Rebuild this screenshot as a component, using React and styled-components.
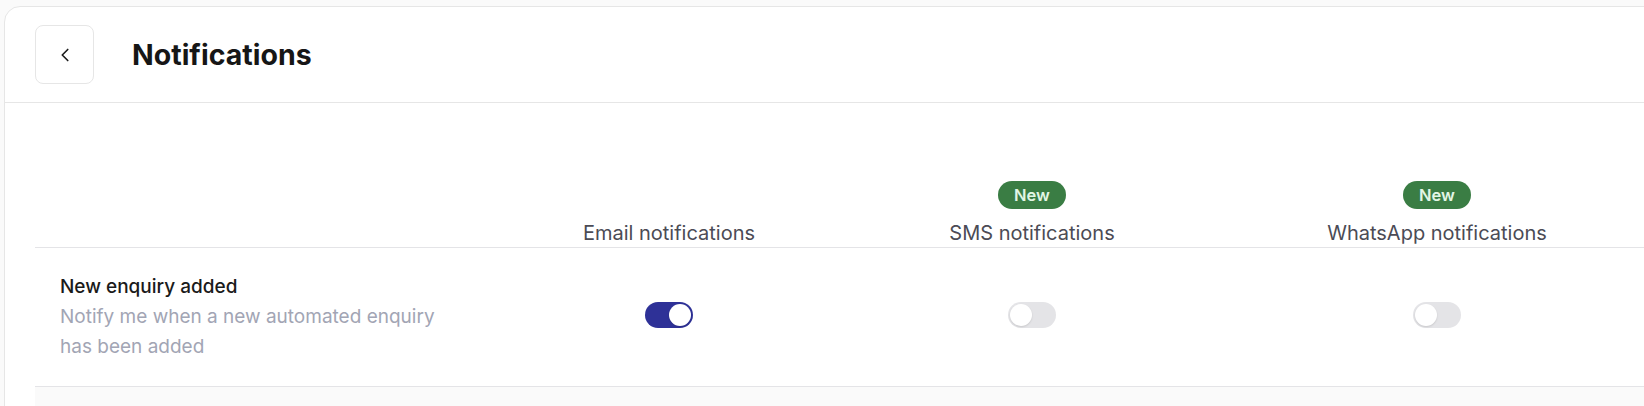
import React, { useState } from 'react';
import styled, { createGlobalStyle } from 'styled-components';
import { ChevronLeft } from 'lucide-react';

const GlobalStyle = createGlobalStyle`
  html, body {
    margin: 0;
    padding: 0;
    background: #fafafa;
    overflow: hidden;
    font-family: Inter, "Noto Sans", sans-serif;
  }
`;

const Card = styled.div`
  margin: 6px 0 0 4px;
  width: calc(100% + 40px);
  min-height: 420px;
  background: #fff;
  border: 1px solid #e6e6e6;
  border-top-left-radius: 16px;
`;

const Header = styled.div`
  display: flex;
  align-items: center;
  gap: 38px;
  padding: 18px 30px 18px;
  border-bottom: 1px solid #e6e6e6;
`;

const BackButton = styled.button`
  width: 59px;
  height: 59px;
  display: flex;
  align-items: center;
  justify-content: center;
  background: #fff;
  border: 1px solid #e6e6e6;
  border-radius: 8px;
  color: #1a1a1a;
  cursor: pointer;
  padding: 0;
`;

const Title = styled.h1`
  margin: 0;
  font-size: 28.5px;
  font-weight: 700;
  color: #161616;
`;

const Table = styled.div`
  padding: 78px 0 0 30px;
`;

const Row = styled.div`
  display: grid;
  grid-template-columns: 465px 338px 388px 422px;
  align-items: ${(p) => (p.$head ? 'end' : 'center')};
  border-bottom: 1px solid #e4e4e7;
  padding: ${(p) => (p.$head ? '0 0 1px' : '24px 0')};
`;

const HeadCell = styled.div`
  display: flex;
  flex-direction: column;
  align-items: center;
  gap: 11px;
`;

const Badge = styled.span`
  display: inline-block;
  background: #3a7d44;
  color: #e2f6e5;
  font-size: 16.5px;
  font-weight: 600;
  line-height: 20px;
  padding: 4px 16px;
  border-radius: 14px;
`;

const HeadLabel = styled.span`
  font-size: 20px;
  line-height: 26px;
  color: #4b4b55;
`;

const Info = styled.div`
  padding-left: 25px;
  max-width: 390px;
`;

const RowTitle = styled.div`
  font-size: 19px;
  font-weight: 500;
  line-height: 30px;
  color: #1a1a1a;
`;

const RowDesc = styled.div`
  font-size: 19px;
  line-height: 30px;
  color: #a2a5b4;
`;

const Cell = styled.div`
  display: flex;
  justify-content: center;
  padding-bottom: 5px;
`;

const Track = styled.button`
  position: relative;
  width: 48px;
  height: 26px;
  padding: 0;
  border: none;
  border-radius: 13px;
  cursor: pointer;
  background: ${(p) => (p.$on ? '#2e3197' : '#e4e4e7')};
`;

const Knob = styled.span`
  position: absolute;
  top: 2px;
  left: ${(p) => (p.$on ? '24px' : '2px')};
  width: 22px;
  height: 22px;
  border-radius: 50%;
  background: #fff;
  box-shadow: 0 1px 2px rgba(0, 0, 0, 0.12);
`;

const Footer = styled.div`
  height: 60px;
  background: #fafafa;
`;

const Toggle = ({ initial }) => {
  const [on, setOn] = useState(initial);
  return (
    <Track $on={on} onClick={() => setOn(!on)}>
      <Knob $on={on} />
    </Track>
  );
};

const channels = [
  { label: 'Email notifications', isNew: false, on: true },
  { label: 'SMS notifications', isNew: true, on: false },
  { label: 'WhatsApp notifications', isNew: true, on: false },
];

export default function App() {
  return (
    <>
      <GlobalStyle />
      <Card>
        <Header>
          <BackButton aria-label="Back">
            <ChevronLeft size={22} strokeWidth={1.8} />
          </BackButton>
          <Title>Notifications</Title>
        </Header>
        <Table>
          <Row $head>
            <div />
            {channels.map((c) => (
              <HeadCell key={c.label}>
                {c.isNew && <Badge>New</Badge>}
                <HeadLabel>{c.label}</HeadLabel>
              </HeadCell>
            ))}
          </Row>
          <Row>
            <Info>
              <RowTitle>New enquiry added</RowTitle>
              <RowDesc>Notify me when a new automated enquiry has been added</RowDesc>
            </Info>
            {channels.map((c) => (
              <Cell key={c.label}>
                <Toggle initial={c.on} />
              </Cell>
            ))}
          </Row>
          <Footer />
        </Table>
      </Card>
    </>
  );
}
